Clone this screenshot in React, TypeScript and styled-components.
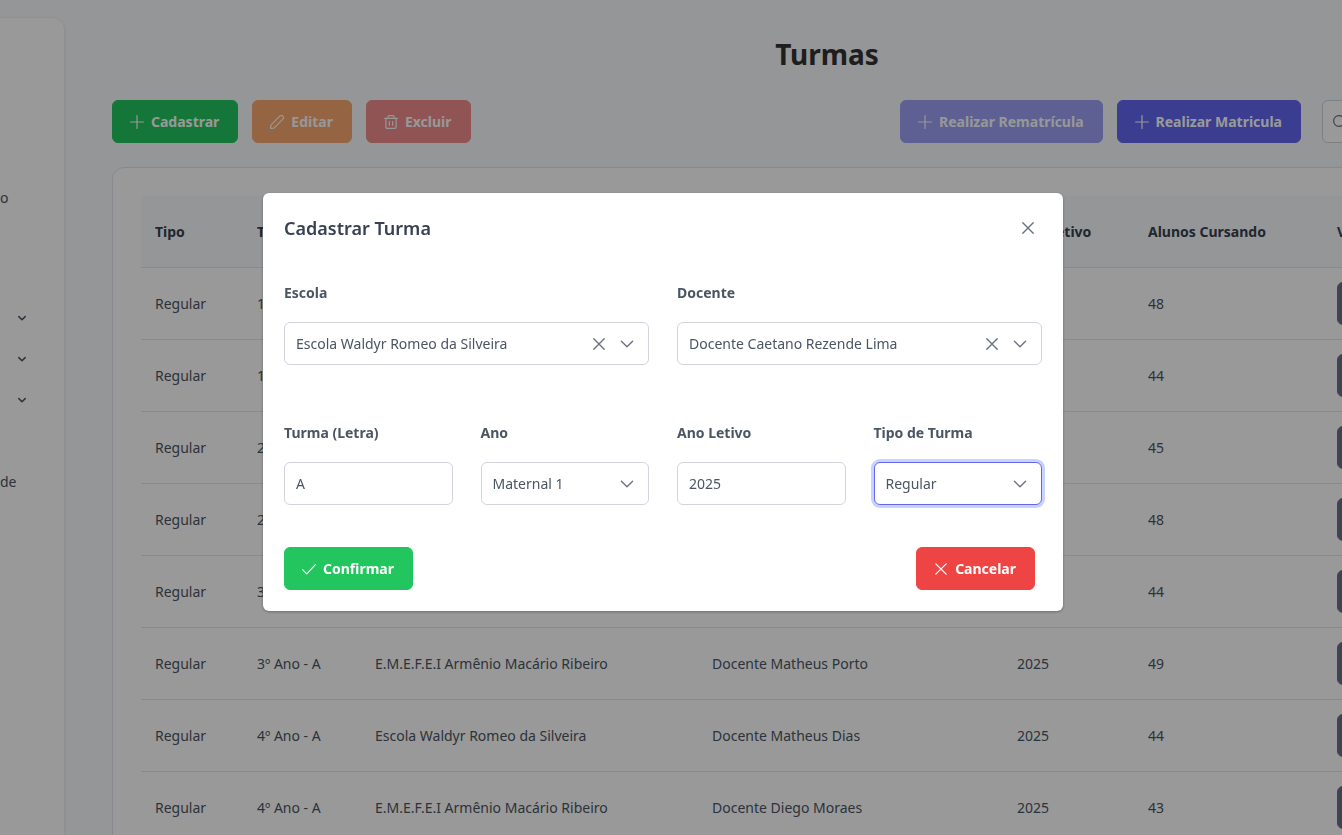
import React from "react";
import styled, { createGlobalStyle } from "styled-components";

const GlobalStyle = createGlobalStyle`
  *, *::before, *::after { box-sizing: border-box; }
  body {
    margin: 0;
    background: #f7fafc;
    color: #4b5563;
    font-family: "Noto Sans", sans-serif;
    font-size: 14px;
    line-height: 21px;
  }
  button, input, select { font: inherit; }
`;

/* ---------- icons ---------- */

const Svg = styled.svg`
  display: block;
  flex: none;
  width: 14px;
  height: 14px;
  fill: none;
  stroke: currentColor;
  stroke-width: 1.2;
  stroke-linecap: round;
  stroke-linejoin: round;
`;

const paths = {
  plus: "M7 .6V13.4M.6 7H13.4",
  pencil:
    "M.6 13.4L.9 10.1L9.9 1.1A2.1 2.1 0 0 1 12.8 1.2A2.1 2.1 0 0 1 12.9 4.1L3.9 13.1Z",
  trash:
    "M.6 3.3H13.4M4 3.3V1.7A1.1 1.1 0 0 1 5.1 .6H8.9A1.1 1.1 0 0 1 10 1.7V3.3M1.9 3.3V12.2A1.2 1.2 0 0 0 3.1 13.4H10.9A1.2 1.2 0 0 0 12.1 12.2V3.3M5.4 6.5V10.3M8.6 6.5V10.3",
  times: "M1.8 1.8L12.2 12.2M12.2 1.8L1.8 12.2",
  check: "M.6 7.7L4.7 11.8L13.4 2.7",
  chevron: "M1.4 4.3L7 9.8L12.6 4.3",
  angle: "M3.8 5.6L7 8.8L10.2 5.6",
  search: "M13.4 13.4L10 10M11.4 6A5.4 5.4 0 1 1 .6 6A5.4 5.4 0 1 1 11.4 6Z",
};

function Icon({ name }: { name: keyof typeof paths }) {
  return (
    <Svg viewBox="0 0 14 14" aria-hidden="true">
      <path d={paths[name]} />
    </Svg>
  );
}

/* ---------- page ---------- */

const Page = styled.div`
  display: flex;
  height: 100vh;
  overflow: hidden;
`;

const Sidebar = styled.aside`
  flex: none;
  width: 64px;
  margin-top: 18px;
  padding-top: 159px;
  background: #fff;
  border-top-right-radius: 12px;
  box-shadow: 0 3px 5px rgba(0, 0, 0, 0.02), 0 0 2px rgba(0, 0, 0, 0.05),
    0 1px 4px rgba(0, 0, 0, 0.08);
`;

const Menu = styled.ul`
  margin: 0 0 79px;
  padding: 0;
  list-style: none;
`;

const MenuLink = styled.a`
  display: flex;
  align-items: center;
  height: 41px;
  color: #4b5563;
  text-decoration: none;
`;

const MenuToggle = styled.button`
  display: flex;
  align-items: center;
  width: 100%;
  height: 41px;
  padding: 0 0 0 15px;
  border: 0;
  background: none;
  color: #4b5563;

  ${Svg} {
    stroke-width: 1.5;
  }
`;

const Main = styled.main`
  flex: none;
  width: calc(100% + 136px);
  padding: 33px 0 0 48px;
`;

const Title = styled.h1`
  margin: 0 0 25px;
  color: #333;
  font-size: 28px;
  line-height: 42px;
  font-weight: 700;
  text-align: center;
`;

const Toolbar = styled.div`
  display: flex;
  justify-content: space-between;
  margin-bottom: 24px;
`;

const Group = styled.div`
  display: flex;
  gap: 14px;
`;

const Button = styled.button<{ $color: string }>`
  display: flex;
  align-items: center;
  gap: 7px;
  height: 43px;
  padding: 0 18px 0 17px;
  border: 1px solid ${(p) => p.$color};
  border-radius: 6px;
  background: ${(p) => p.$color};
  color: #fff;
  font-weight: 700;
  white-space: nowrap;

  &:disabled {
    opacity: 0.6;
  }
`;

const Search = styled.label`
  display: flex;
  align-items: center;
  gap: 7px;
  width: 220px;
  height: 43px;
  margin-left: 7px;
  padding: 0 10px;
  border: 1px solid #d1d5db;
  border-radius: 6px;
  background: #fff;
  color: #6b7280;
`;

const SearchInput = styled.input`
  flex: 1;
  min-width: 0;
  border: 0;
  outline: 0;
  background: none;
`;

const Card = styled.section`
  padding: 28px;
  border: 1px solid #dfe7ef;
  border-radius: 12px;
  background: #fff;
`;

const Table = styled.table`
  width: 100%;
  table-layout: fixed;
  border-collapse: separate;
  border-spacing: 0;
`;

const Col = styled.col<{ $w?: number }>`
  width: ${(p) => (p.$w ? `${p.$w}px` : "auto")};
`;

const Th = styled.th`
  height: 72px;
  padding: 0 14px;
  border-bottom: 1px solid #e5e7eb;
  background: #f8fafc;
  color: #374151;
  font-weight: 700;
  text-align: left;
  white-space: nowrap;
`;

const Td = styled.td`
  height: 72px;
  padding: 0 14px;
  border-bottom: 1px solid #e5e7eb;
  white-space: nowrap;
`;

/* ---------- dialog ---------- */

const Mask = styled.div`
  position: fixed;
  inset: 0;
  display: flex;
  align-items: center;
  justify-content: center;
  padding: 0 16px 31px 0;
  background: rgba(0, 0, 0, 0.4);
`;

const Dialog = styled.form`
  width: 800px;
  max-width: 100%;
  border-radius: 6px;
  background: #fff;
  box-shadow: 0 1px 3px rgba(0, 0, 0, 0.3);
`;

const DialogHeader = styled.header`
  display: flex;
  align-items: center;
  justify-content: space-between;
  padding: 21px;
`;

const DialogTitle = styled.h2`
  margin: 0;
  color: #374151;
  font-size: 18px;
  line-height: 28px;
  font-weight: 600;
`;

const IconButton = styled.button`
  display: flex;
  align-items: center;
  justify-content: center;
  width: 28px;
  height: 28px;
  padding: 0;
  border: 0;
  background: none;
  color: #6b7280;

  ${Svg} {
    stroke-width: 1.4;
  }
`;

const DialogBody = styled.div`
  display: grid;
  gap: 57px;
  padding: 19px 21px 0;
`;

const FieldRow = styled.div<{ $cols: number }>`
  display: grid;
  grid-template-columns: repeat(${(p) => p.$cols}, 1fr);
  gap: 28px;
`;

const Field = styled.div`
  display: grid;
  gap: 19px;
  min-width: 0;
`;

const Label = styled.label`
  font-weight: 700;
`;

const Control = styled.div<{ $focused?: boolean }>`
  display: grid;
  grid-template-columns: 1fr auto;
  align-items: center;
  height: 43px;
  border: 1px solid ${(p) => (p.$focused ? "#6366f1" : "#d1d5db")};
  border-radius: 6px;
  background: #fff;
  box-shadow: ${(p) => (p.$focused ? "0 0 0 3px #c7d2fe" : "none")};
`;

const TextInput = styled.input`
  grid-area: 1 / 1 / 2 / 3;
  width: 100%;
  min-width: 0;
  height: 41px;
  padding: 0 11px;
  border: 0;
  outline: 0;
  background: none;
  color: #4b5563;
`;

const Select = styled.select`
  grid-area: 1 / 1 / 2 / 3;
  width: 100%;
  min-width: 0;
  height: 41px;
  padding: 0 11px;
  border: 0;
  outline: 0;
  appearance: none;
  background: none;
  color: #4b5563;
`;

const Adornments = styled.div`
  grid-area: 1 / 2;
  display: flex;
  align-items: center;
  padding-right: 14px;
  gap: 7px;
  color: #6b7280;
  pointer-events: none;

  ${Svg} {
    stroke-width: 1.4;
  }

  ${IconButton} {
    pointer-events: auto;
  }
`;

const DialogFooter = styled.footer`
  display: flex;
  justify-content: space-between;
  padding: 42px 28px 21px 21px;
`;

/* ---------- data ---------- */

const columns = [
  { title: "Tipo", width: 102 },
  { title: "Turma", width: 118 },
  { title: "Escola", width: 337 },
  { title: "Docente", width: 305 },
  { title: "Ano Letivo", width: 131 },
  { title: "Alunos Cursando", width: 189 },
  { title: "Visualizar" },
];

const waldyr = "Escola Waldyr Romeo da Silveira";
const armenio = "E.M.E.F.E.I Armênio Macário Ribeiro";

const rows = [
  ["1º Ano - A", waldyr, "Docente Caetano Rezende Lima", "48"],
  ["1º Ano - A", armenio, "Docente Matheus Dias", "44"],
  ["2º Ano - A", waldyr, "Docente Diego Moraes", "45"],
  ["2º Ano - A", armenio, "Docente Matheus Porto", "48"],
  ["3º Ano - A", waldyr, "Docente Matheus Dias", "44"],
  ["3º Ano - A", armenio, "Docente Matheus Porto", "49"],
  ["4º Ano - A", waldyr, "Docente Matheus Dias", "44"],
  ["4º Ano - A", armenio, "Docente Diego Moraes", "43"],
];

type SelectFieldProps = {
  id: string;
  label: string;
  value: string;
  clearable?: boolean;
  focused?: boolean;
};

function SelectField({ id, label, value, clearable, focused }: SelectFieldProps) {
  return (
    <Field>
      <Label htmlFor={id}>{label}</Label>
      <Control $focused={focused}>
        <Select id={id} defaultValue={value}>
          <option>{value}</option>
        </Select>
        <Adornments>
          {clearable && (
            <IconButton type="button" aria-label={`Limpar ${label}`}>
              <Icon name="times" />
            </IconButton>
          )}
          <Icon name="chevron" />
        </Adornments>
      </Control>
    </Field>
  );
}

function TextField({ id, label, value }: { id: string; label: string; value: string }) {
  return (
    <Field>
      <Label htmlFor={id}>{label}</Label>
      <Control>
        <TextInput id={id} type="text" defaultValue={value} />
      </Control>
    </Field>
  );
}

export default function App() {
  return (
    <>
      <GlobalStyle />
      <Page>
        <Sidebar>
          <Menu>
            <li>
              <MenuLink href="#inicio">o</MenuLink>
            </li>
          </Menu>
          <Menu>
            {["Cadastros", "Turmas", "Alunos"].map((name) => (
              <li key={name}>
                <MenuToggle type="button" aria-label={name}>
                  <Icon name="angle" />
                </MenuToggle>
              </li>
            ))}
            <li>
              <MenuLink href="#item" aria-label="Item" />
            </li>
            <li>
              <MenuLink href="#unidade">de</MenuLink>
            </li>
          </Menu>
        </Sidebar>

        <Main>
          <Title>Turmas</Title>
          <Toolbar>
            <Group>
              <Button type="button" $color="#22c55e">
                <Icon name="plus" />
                Cadastrar
              </Button>
              <Button type="button" $color="#f97316" disabled>
                <Icon name="pencil" />
                Editar
              </Button>
              <Button type="button" $color="#ef4444" disabled>
                <Icon name="trash" />
                Excluir
              </Button>
            </Group>
            <Group>
              <Button type="button" $color="#6366f1" disabled>
                <Icon name="plus" />
                Realizar Rematrícula
              </Button>
              <Button type="button" $color="#6366f1">
                <Icon name="plus" />
                Realizar Matricula
              </Button>
              <Search>
                <Icon name="search" />
                <SearchInput type="search" aria-label="Pesquisar" />
              </Search>
            </Group>
          </Toolbar>

          <Card>
            <Table>
              <colgroup>
                {columns.map((c) => (
                  <Col key={c.title} $w={c.width} />
                ))}
              </colgroup>
              <thead>
                <tr>
                  {columns.map((c) => (
                    <Th key={c.title} scope="col">
                      {c.title}
                    </Th>
                  ))}
                </tr>
              </thead>
              <tbody>
                {rows.map(([turma, escola, docente, alunos], i) => (
                  <tr key={i}>
                    <Td>Regular</Td>
                    <Td>{turma}</Td>
                    <Td>{escola}</Td>
                    <Td>{docente}</Td>
                    <Td>2025</Td>
                    <Td>{alunos}</Td>
                    <Td>
                      <Button type="button" $color="#64748b" aria-label="Visualizar turma">
                        <Icon name="search" />
                      </Button>
                    </Td>
                  </tr>
                ))}
              </tbody>
            </Table>
          </Card>
        </Main>
      </Page>

      <Mask>
        <Dialog role="dialog" aria-modal="true" aria-labelledby="dialog-title">
          <DialogHeader>
            <DialogTitle id="dialog-title">Cadastrar Turma</DialogTitle>
            <IconButton type="button" aria-label="Fechar">
              <Icon name="times" />
            </IconButton>
          </DialogHeader>
          <DialogBody>
            <FieldRow $cols={2}>
              <SelectField id="escola" label="Escola" value={waldyr} clearable />
              <SelectField
                id="docente"
                label="Docente"
                value="Docente Caetano Rezende Lima"
                clearable
              />
            </FieldRow>
            <FieldRow $cols={4}>
              <TextField id="letra" label="Turma (Letra)" value="A" />
              <SelectField id="ano" label="Ano" value="Maternal 1" />
              <TextField id="ano-letivo" label="Ano Letivo" value="2025" />
              <SelectField id="tipo" label="Tipo de Turma" value="Regular" focused />
            </FieldRow>
          </DialogBody>
          <DialogFooter>
            <Button type="button" $color="#22c55e">
              <Icon name="check" />
              Confirmar
            </Button>
            <Button type="button" $color="#ef4444">
              <Icon name="times" />
              Cancelar
            </Button>
          </DialogFooter>
        </Dialog>
      </Mask>
    </>
  );
}
